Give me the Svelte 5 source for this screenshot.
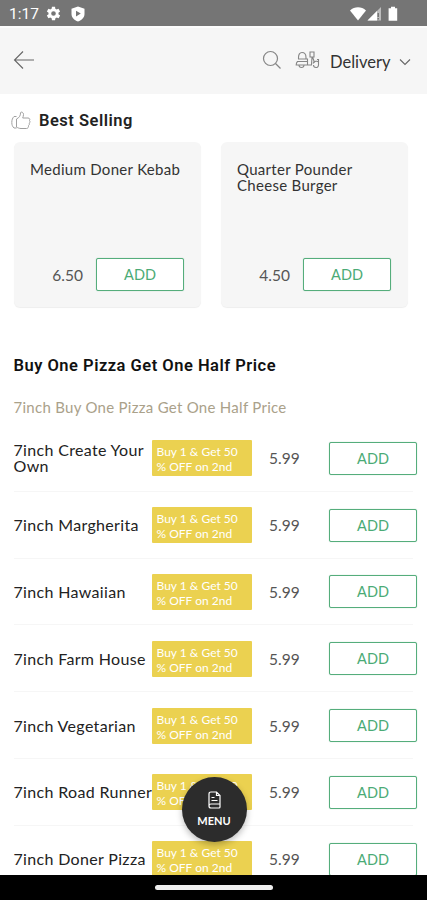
<script>
  const bestSelling = [
    { name: 'Medium Doner Kebab', price: '6.50' },
    { name: 'Quarter Pounder Cheese Burger', price: '4.50' },
  ];

  const pizzas = [
    { name: '7inch Create Your Own', price: '5.99' },
    { name: '7inch Margherita', price: '5.99' },
    { name: '7inch Hawaiian', price: '5.99' },
    { name: '7inch Farm House', price: '5.99' },
    { name: '7inch Vegetarian', price: '5.99' },
    { name: '7inch Road Runner', price: '5.99' },
    { name: '7inch Doner Pizza', price: '5.99' },
  ];
</script>

<div class="screen">
  <div class="status-bar">
    <span class="clock">1:17</span>
    <svg class="gear" width="17" height="17" viewBox="2 1 22 22">
      <path fill="#fff" fill-rule="evenodd" d="M19.400 13a7.500 7.500 0 0 0 0-2l2.100-1.600-2-3.500-2.500 1a7 7 0 0 0-1.700-1L15 3.200h-4l-.4 2.700a7 7 0 0 0-1.700 1l-2.500-1-2 3.500L6.600 11a7.500 7.500 0 0 0 0 2l-2.200 1.600 2 3.500 2.500-1a7 7 0 0 0 1.700 1l.4 2.700h4l.4-2.700a7 7 0 0 0 1.700-1l2.500 1 2-3.500zM13 15a3 3 0 1 1 0-6 3 3 0 0 1 0 6z" />
    </svg>
    <svg class="shield" width="14" height="16" viewBox="0 0 14 16">
      <path fill="#fff" fill-rule="evenodd" d="M7 .5L13.500 2.800V8c0 3.500-2.700 6.300-6.500 7.500C3.200 14.300.5 11.500.5 8V2.800zM5 4.800v5.600l4.800-2.800z" />
    </svg>
    <svg class="signals" width="49" height="16" viewBox="0 0 49 16">
      <path fill="#fff" d="M0 4.500C4.500.2 11.500.2 16 4.500L8 14.500z" />
      <path fill="#bdbdbd" d="M31 1v13.500H17.500z" />
      <path fill="#fff" d="M27 5v9.500h-9.500z" />
      <path fill="#757575" d="M27.500 7h1.500v4h-1.500zM27.500 12h1.500v1.500h-1.500z" />
      <path fill="#fff" d="M41 .8h4v1.400h2.200v12.600h-8.600V2.200H41z" />
    </svg>
  </div>

  <header class="header">
    <svg class="back" width="22" height="20" viewBox="0 0 22 20" fill="none" stroke="#666" stroke-width="1.100">
      <path d="M21 10H1.500M10 1.500L1.500 10l8.500 8.500" />
    </svg>
    <svg class="search" width="20" height="20" viewBox="0 0 20 20" fill="none" stroke="#858585" stroke-width="1.200">
      <circle cx="8.500" cy="8.500" r="7" />
      <path d="M13.500 13.500l5 5" />
    </svg>
    <svg class="scooter" width="25" height="18" viewBox="0 0 25 18" fill="none" stroke="#858585" stroke-width="1.100">
      <path d="M3.500 8V6.500c0-3 1.200-5 3.500-5s4 2 4 5V8" />
      <path d="M3 8h9.500v2.500H2.500c-1 1-1.300 2-1.300 3.500h15.300c0-3 .5-5.500.5-8h-2V1h4v5h-1.500l2 5.500" />
      <path d="M4 14a2.500 2.500 0 0 0 5 0M12.500 10.500V14M18 12.500c1-2.500 4.500-2.800 5.500-1.500M18.500 14a2.500 2.500 0 0 0 5 0v-5.500H22" />
    </svg>
    <span class="mode">Delivery</span>
    <svg class="chevron" width="12" height="8" viewBox="0 0 12 8" fill="none" stroke="#666" stroke-width="1.100">
      <path d="M1 1.500l5 5 5-5" />
    </svg>
  </header>

  <main>
    <div class="best-title">
      <svg width="20" height="19" viewBox="0 0 20 19" fill="none" stroke="#a0a0a0" stroke-width="1">
        <path d="M5.500 8C8.500 6.500 9.500 4.500 9.500 2c0-1.500 3-1.200 3 1.500 0 1.500-.5 2.500-.8 3.500h5.300c1.800 0 2.200 1.500 1.500 2.500.8 1 .5 2-.3 2.600.5 1 .1 2-.7 2.500.2 1.500-.6 2.900-2 2.900H10c-2 0-3-.8-4.500-1.300zM5.500 5.500H3C1.500 7 .8 9 .8 11.500s.7 4 2.200 5.500h2.500" />
      </svg>
      <h2>Best Selling</h2>
    </div>

    <div class="cards">
      {#each bestSelling as item}
        <div class="card">
          <p class="card-name">{item.name}</p>
          <div class="card-footer">
            <span class="price">{item.price}</span>
            <button class="add">ADD</button>
          </div>
        </div>
      {/each}
    </div>

    <h2 class="section-title">Buy One Pizza Get One Half Price</h2>
    <h3 class="sub-title">7inch Buy One Pizza Get One Half Price</h3>

    <ul class="items">
      {#each pizzas as pizza}
        <li class="item">
          <span class="item-name">{pizza.name}</span>
          <span class="offer">Buy 1 &amp; Get 50<br />% OFF on 2nd</span>
          <span class="price">{pizza.price}</span>
          <button class="add">ADD</button>
        </li>
      {/each}
    </ul>
  </main>

  <button class="menu">
    <svg width="13" height="18" viewBox="0 0 13 18" fill="none" stroke="#fff" stroke-width="1.200">
      <path d="M1 15V3c0-1.300.7-2 2-2h5.500L12 4.500V13H3c-1.300 0-2 .8-2 2s.7 2 2 2h8c.6 0 1-.4 1-1v-3M8.500 1v3.500H12M3.500 6.500h3M3.500 9.500h6" />
    </svg>
    <span>MENU</span>
  </button>

  <div class="nav-bar"><div class="pill"></div></div>
</div>

<style>
  .screen {
    position: relative;
    display: flex;
    flex-direction: column;
    width: 427px;
    height: 900px;
    overflow: hidden;
    background: #fff;
    color: #333;
    font-family: Lato, sans-serif;
  }

  h2, h3, p, ul {
    margin: 0;
    padding: 0;
  }

  button {
    padding: 0;
    font-family: inherit;
  }

  svg {
    flex: none;
  }

  .status-bar {
    display: flex;
    align-items: center;
    flex: none;
    box-sizing: border-box;
    height: 26px;
    padding: 1px 28px 0 9px;
    background: #757575;
    color: #fff;
    font-family: Roboto, sans-serif;
  }

  .clock {
    width: 36px;
    font-size: 15.500px;
  }

  .shield {
    margin-left: 9px;
  }

  .signals {
    margin-left: auto;
  }

  .header {
    display: flex;
    align-items: center;
    flex: none;
    box-sizing: border-box;
    height: 68px;
    padding: 0 15px 2px 13px;
    border-top: 2px solid #fcfcfc;
    background: #f6f6f6;
  }

  .search {
    margin-left: auto;
  }

  .scooter {
    margin-left: 13px;
  }

  .mode {
    width: 62px;
    margin-left: 10px;
    padding-top: 3px;
    font-size: 16.500px;
  }

  .chevron {
    margin: 4px 1px 0 7px;
  }

  main {
    flex: 1;
    min-height: 0;
    overflow: hidden;
  }

  .best-title {
    display: flex;
    align-items: center;
    height: 48px;
    padding: 4px 0 0 11px;
    gap: 8px;
    box-sizing: border-box;
  }

  h2 {
    color: #222;
    font-family: Roboto, sans-serif;
    font-size: 16.500px;
    font-weight: 600;
    letter-spacing: 0.5px;
  }

  .cards {
    display: grid;
    grid-template-columns: 187px 187px;
    gap: 20px;
    padding-left: 14px;
  }

  .card {
    display: flex;
    flex-direction: column;
    justify-content: space-between;
    box-sizing: border-box;
    height: 165px;
    padding: 19px 16px 16px;
    border-radius: 6px;
    background: #f6f6f6;
    box-shadow: 0 1px 1px #eee;
  }

  .card-name {
    font-size: 15px;
    line-height: 16px;
    letter-spacing: 0.3px;
  }

  .card-footer {
    display: flex;
    align-items: center;
    justify-content: flex-end;
    gap: 13px;
    padding-right: 1px;
  }

  .price {
    color: #555;
    font-size: 15.500px;
  }

  .add {
    width: 88px;
    height: 33px;
    border: 1px solid #55ad7c;
    border-radius: 2px;
    background: #fff;
    box-shadow: 0 0 1px #8cc8a6;
    color: #4bab76;
    font-size: 14.500px;
  }

  .section-title {
    padding: 49px 13.500px 0;
    color: #111;
    line-height: 20px;
  }

  .sub-title {
    padding: 21px 13.500px 0;
    color: #aaa18a;
    font-size: 15px;
    font-weight: 400;
    line-height: 20px;
    letter-spacing: 0.28px;
  }

  .items {
    padding: 8px 10px 0 13.500px;
    list-style: none;
  }

  .item {
    display: grid;
    grid-template-columns: 138px 100.500px 60px 88px;
    align-items: center;
    height: 66.800px;
    box-sizing: border-box;
    background: linear-gradient(#f6f6f6, #f6f6f6) bottom left / 399px 1px no-repeat;
  }

  .item .price {
    padding-left: 17px;
  }

  .item .add {
    margin-left: 17px;
  }

  /* long names may run up to the edge of the offer */
  .item-name {
    margin-right: -6px;
    color: #222;
    font-size: 16px;
    line-height: 16px;
    letter-spacing: 0.33px;
  }

  .offer {
    box-sizing: border-box;
    height: 36px;
    padding: 4px 5px 0;
    border-radius: 1px;
    background: #ebd150;
    color: #fff;
    font-size: 12px;
    line-height: 15px;
    white-space: nowrap;
  }

  /* floats over the list */
  .menu {
    position: absolute;
    left: 181.500px;
    top: 777px;
    display: flex;
    flex-direction: column;
    align-items: center;
    justify-content: center;
    gap: 5px;
    width: 65px;
    height: 65px;
    padding-bottom: 1px;
    border: 0;
    border-radius: 50%;
    background: #2c2c2c;
    box-shadow: 0 3px 6px rgba(0, 0, 0, 0.25);
    color: #fff;
    font-size: 11px;
    font-weight: 700;
    line-height: 14px;
  }

  .nav-bar {
    display: flex;
    align-items: center;
    justify-content: center;
    flex: none;
    height: 25px;
    background: #000;
  }

  .pill {
    width: 118px;
    height: 5px;
    border-radius: 3px;
    background: #eee;
  }
</style>
